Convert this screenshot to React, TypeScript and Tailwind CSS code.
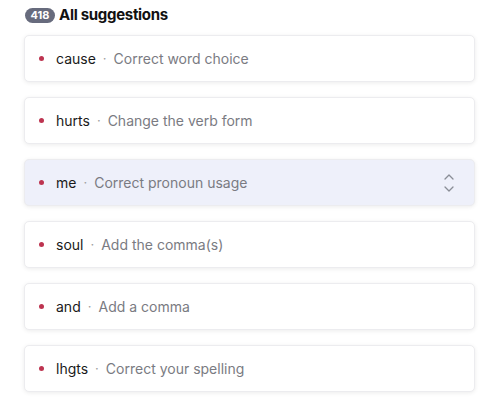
const items = [
  { word: 'cause', desc: 'Correct word choice' },
  { word: 'hurts', desc: 'Change the verb form' },
  { word: 'me', desc: 'Correct pronoun usage', active: true },
  { word: 'soul', desc: 'Add the comma(s)' },
  { word: 'and', desc: 'Add a comma' },
  { word: 'lhgts', desc: 'Correct your spelling' },
];

const Chevrons = () => (
  <svg width="12" height="22" viewBox="0 0 12 22" fill="none" stroke="#8a8d96" strokeWidth="1.3" strokeLinecap="round" strokeLinejoin="round">
    <path d="M2 7 L6 3 L10 7" />
    <path d="M2 15 L6 19 L10 15" />
  </svg>
);

export default function App() {
  return (
    <div className="w-[500px] h-[399px] bg-white overflow-hidden" style={{ fontFamily: 'Inter, "Noto Sans", sans-serif' }}>
      <div className="flex items-center gap-[4px] pl-[25px] pt-[8px] h-[30px] -mt-[4px]">
        <span className="h-[15px] w-[30px] flex items-center justify-center rounded-full bg-[#676b7d] text-white text-[11px] font-bold">418</span>
        <span className="text-[15px] font-bold text-[#111] tracking-[-0.3px]">All suggestions</span>
      </div>
      <div className="flex flex-col gap-[15px] pl-[24px] pt-[9px] w-[475px]">
        {items.map((it) => (
          <div
            key={it.word}
            className={`h-[47px] rounded-[5px] border border-[#ececef] shadow-[0_1px_4px_rgba(0,0,0,0.08)] flex items-center pl-[14px] pr-[19px] ${it.active ? 'bg-[#eef0fa]' : 'bg-white'}`}
          >
            <span className="w-[5px] h-[5px] rounded-full bg-[#bd3450]" />
            <span className="ml-[12px] text-[14px] text-[#1a1a1a] font-normal">{it.word}</span>
            <span className="mx-[7px] text-[13px] text-[#a0a0a0]">·</span>
            <span className="text-[14px] text-[#7a7b82]">{it.desc}</span>
            {it.active && (
              <span className="ml-auto">
                <Chevrons />
              </span>
            )}
          </div>
        ))}
      </div>
    </div>
  );
}
